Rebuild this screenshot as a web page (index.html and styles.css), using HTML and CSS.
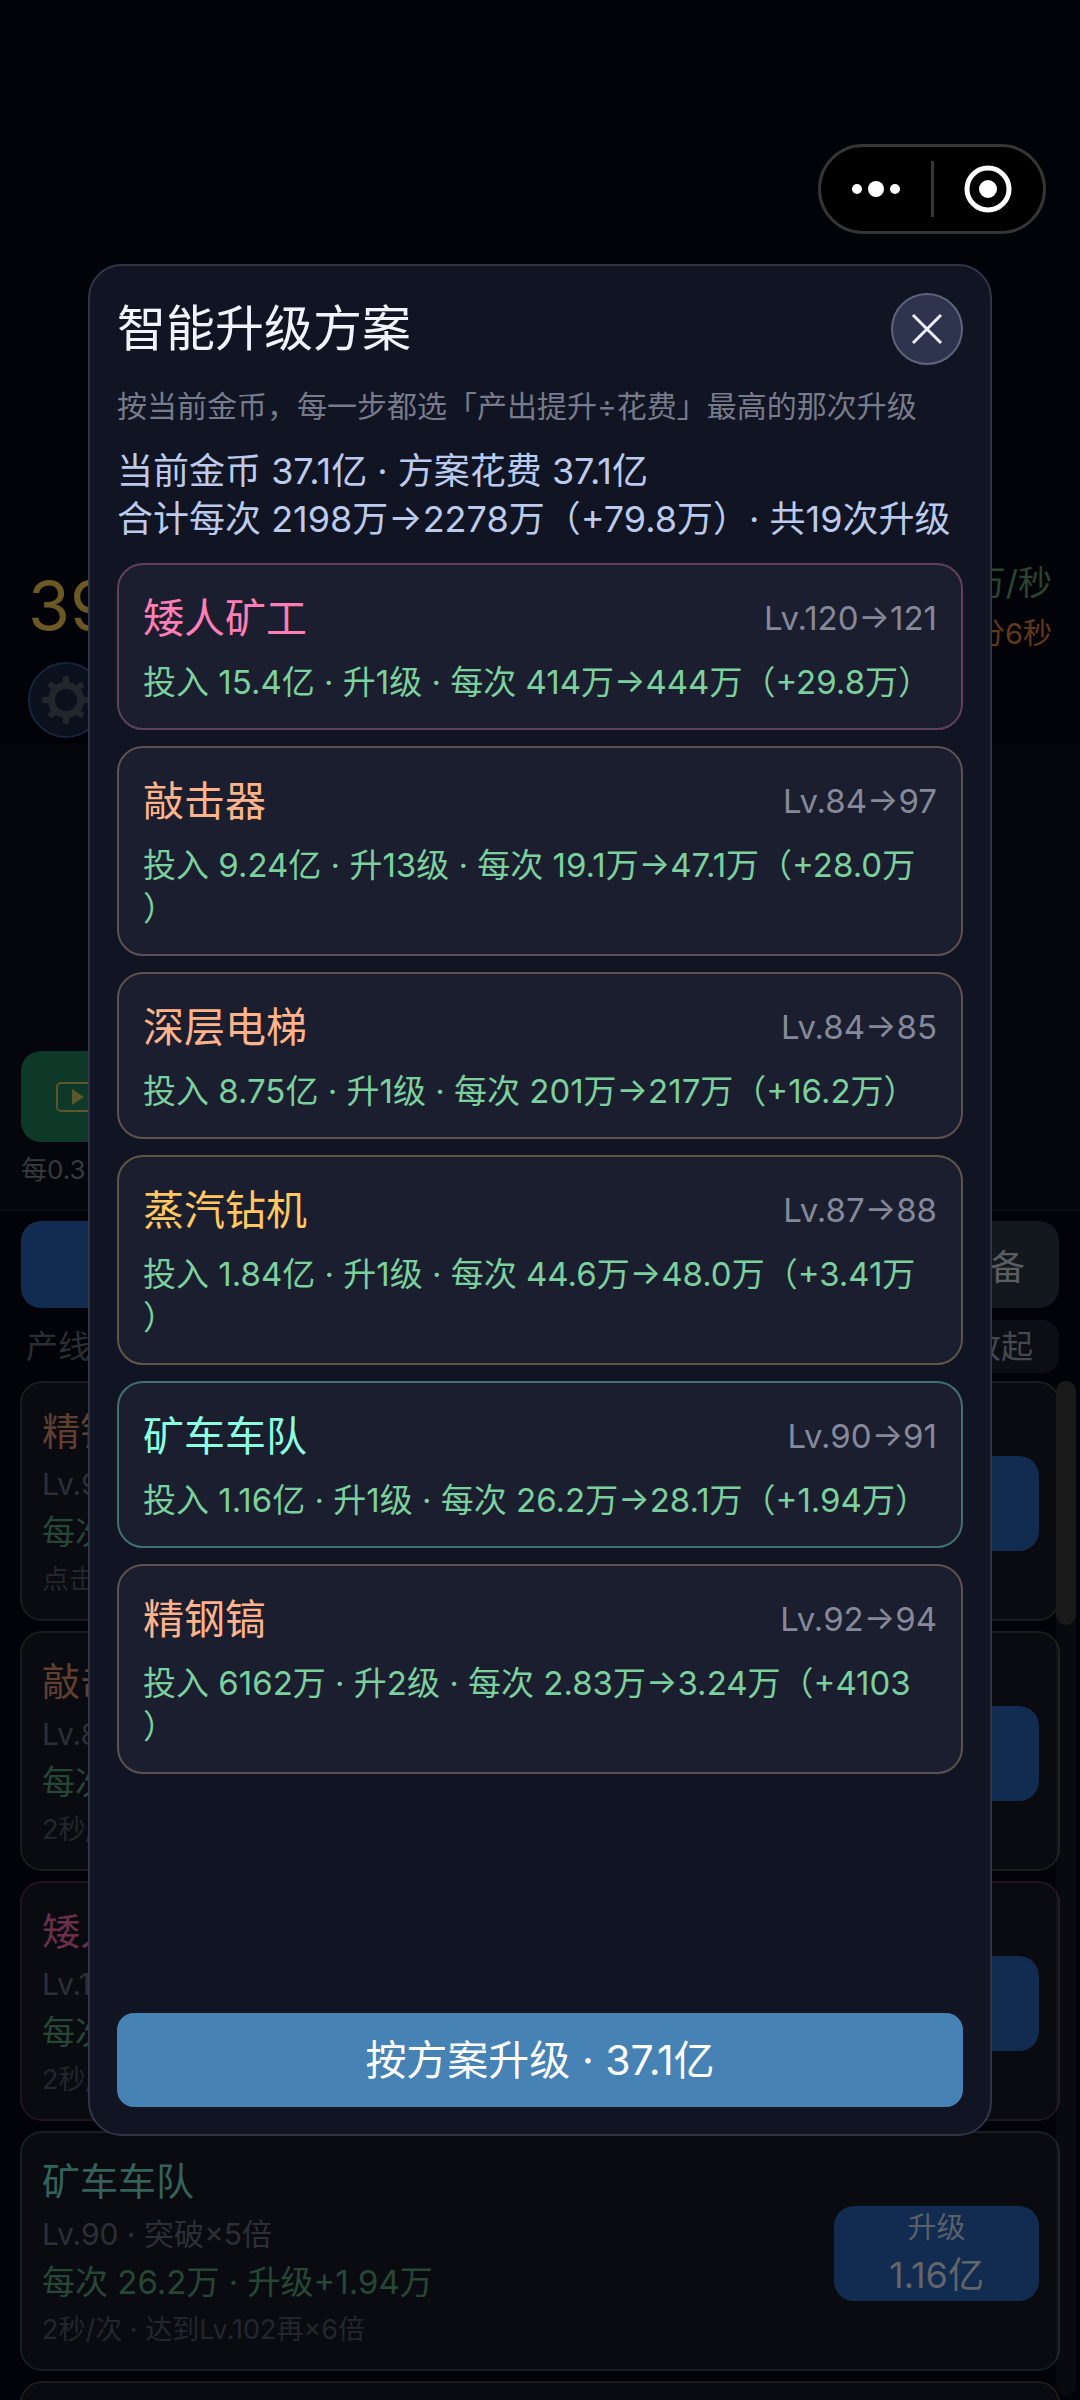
FILE: index.html
```html
<!DOCTYPE html>
<html lang="zh-CN">

<head>
    <meta charset="UTF-8">
    <meta name="viewport" content="width=device-width, initial-scale=1.0">
    <title>智能升级方案</title>
    <link rel="stylesheet" href="styles.css">
</head>

<body>
    <!-- game page -->
    <main class="game">
        <header class="status">
            <div class="status-row">
                <p class="coins">39</p>
                <div class="rates">
                    <p class="rate">万/秒</p>
                    <p class="timer">分6秒</p>
                </div>
            </div>
            <button class="settings" type="button" aria-label="设置">
                <svg viewBox="0 0 50 50" width="50" height="50">
                    <g fill="none" stroke="currentColor">
                        <circle cx="25" cy="25" r="14.500" stroke-width="7" />
                        <path stroke-width="6.500" stroke-linecap="round" d="M25 8V4M25 42v4M8 25H4M42 25h4M13 13l-2.500-2.500M37 37l2.500 2.500M37 13l2.500-2.500M13 37l-2.500 2.500" />
                    </g>
                </svg>
            </button>
        </header>

        <section class="scene">
            <button class="ad-button" type="button" aria-label="播放">
                <svg viewBox="0 0 44 30" width="44" height="30">
                    <rect x="1" y="1" width="42" height="28" rx="4" fill="none" stroke="currentColor" stroke-width="2" />
                    <path d="M16 7l12 8-12 8z" fill="currentColor" />
                </svg>
            </button>
            <p class="ad-note">每0.3</p>
        </section>

        <nav class="tabs">
            <button class="tab active" type="button" aria-label="产线"></button>
            <button class="tab" type="button">装备</button>
        </nav>

        <div class="list-head">
            <h2>产线</h2>
            <button class="fold" type="button">收起</button>
        </div>

        <section class="lines">
            <article class="line orange">
                <div class="line-info">
                    <h3>精钢</h3>
                    <p class="level">Lv.9</p>
                    <p class="output">每次</p>
                    <p class="hint">点击</p>
                </div>
                <button class="upgrade" type="button" aria-label="升级"></button>
            </article>
            <article class="line orange">
                <div class="line-info">
                    <h3>敲击</h3>
                    <p class="level">Lv.8</p>
                    <p class="output">每次</p>
                    <p class="hint">2秒/</p>
                </div>
                <button class="upgrade" type="button" aria-label="升级"></button>
            </article>
            <article class="line pink">
                <div class="line-info">
                    <h3>矮人</h3>
                    <p class="level">Lv.1</p>
                    <p class="output">每次</p>
                    <p class="hint">2秒/</p>
                </div>
                <button class="upgrade" type="button" aria-label="升级"></button>
            </article>
            <article class="line teal">
                <div class="line-info">
                    <h3>矿车车队</h3>
                    <p class="level">Lv.90 · 突破×5倍</p>
                    <p class="output">每次 26.2万 · 升级+1.94万</p>
                    <p class="hint">2秒/次 · 达到Lv.102再×6倍</p>
                </div>
                <button class="upgrade" type="button"><span>升级</span><strong>1.16亿</strong></button>
            </article>
            <article class="line gold"></article>
            <div class="scrollbar"><div class="thumb"></div></div>
        </section>
    </main>

    <!-- upgrade plan -->
    <div class="overlay">
        <div class="modal" role="dialog" aria-labelledby="planTitle">
            <div class="modal-head">
                <h1 id="planTitle">智能升级方案</h1>
                <button class="close" type="button" aria-label="关闭">
                    <svg viewBox="0 0 32 32" width="32" height="32">
                        <path d="M2 2l28 28M30 2L2 30" fill="none" stroke="currentColor" stroke-width="3" />
                    </svg>
                </button>
            </div>
            <p class="modal-tip">按当前金币，每一步都选「产出提升÷花费」最高的那次升级</p>
            <p class="summary">当前金币 37.1亿 · 方案花费 37.1亿<br>合计每次 2198万→2278万（+79.8万）· 共19次升级</p>

            <ul class="plan">
                <li class="step pink">
                    <div class="step-head"><h2>矮人矿工</h2><span>Lv.120→121</span></div>
                    <p>投入 15.4亿 · 升1级 · 每次 414万→444万（+29.8万）</p>
                </li>
                <li class="step orange">
                    <div class="step-head"><h2>敲击器</h2><span>Lv.84→97</span></div>
                    <p>投入 9.24亿 · 升13级 · 每次 19.1万→47.1万（+28.0万<br>）</p>
                </li>
                <li class="step orange">
                    <div class="step-head"><h2>深层电梯</h2><span>Lv.84→85</span></div>
                    <p>投入 8.75亿 · 升1级 · 每次 201万→217万（+16.2万）</p>
                </li>
                <li class="step gold">
                    <div class="step-head"><h2>蒸汽钻机</h2><span>Lv.87→88</span></div>
                    <p>投入 1.84亿 · 升1级 · 每次 44.6万→48.0万（+3.41万<br>）</p>
                </li>
                <li class="step teal">
                    <div class="step-head"><h2>矿车车队</h2><span>Lv.90→91</span></div>
                    <p>投入 1.16亿 · 升1级 · 每次 26.2万→28.1万（+1.94万）</p>
                </li>
                <li class="step orange">
                    <div class="step-head"><h2>精钢镐</h2><span>Lv.92→94</span></div>
                    <p>投入 6162万 · 升2级 · 每次 2.83万→3.24万（+4103<br>）</p>
                </li>
            </ul>

            <button class="confirm" type="button">按方案升级 · 37.1亿</button>
        </div>
    </div>

    <!-- mini program menu -->
    <div class="capsule">
        <button type="button" aria-label="更多">
            <svg viewBox="0 0 50 20" width="50" height="20" fill="currentColor">
                <circle cx="6" cy="10" r="5" />
                <circle cx="25" cy="10" r="8" />
                <circle cx="44" cy="10" r="5" />
            </svg>
        </button>
        <button type="button" aria-label="退出">
            <svg viewBox="0 0 48 48" width="48" height="48">
                <circle cx="24" cy="24" r="21" fill="none" stroke="currentColor" stroke-width="5" />
                <circle cx="24" cy="24" r="9" fill="currentColor" />
            </svg>
        </button>
    </div>
</body>

</html>
```
FILE: styles.css
```css
:root {
    --modal: #111422;
    --card: #1b1e2e;
    --green: #7bd09e;
    --blue: #122b50;
}

* {
    margin: 0;
    padding: 0;
    box-sizing: border-box;
}

body {
    font-family: Inter, "Noto Sans CJK SC", sans-serif;
    text-spacing-trim: space-all;
    background-color: #020308;
    height: 100vh;
    overflow: hidden;
}

h1,
h2,
h3,
strong {
    font-weight: normal;
}

ul {
    list-style: none;
}

button {
    font-family: inherit;
    border: none;
    cursor: pointer;
}

svg {
    display: block;
}

/* game page */
.game {
    height: 100vh;
    overflow: hidden;
    padding-top: 558px;
}

.status {
    padding: 0 28px;
    height: 187px;
}

.status-row {
    display: flex;
    justify-content: space-between;
    height: 104px;
}

.coins {
    font-size: 68px;
    line-height: 94px;
    color: #6b5824;
}

.rates {
    text-align: right;
}

.rate {
    font-size: 34px;
    line-height: 50px;
    color: #29452f;
}

.timer {
    font-size: 29px;
    line-height: 52px;
    color: #65381e;
}

.settings {
    width: 76px;
    height: 76px;
    border-radius: 50%;
    border: 2px solid #17243c;
    background-color: #0a101c;
    color: #21272d;
    display: flex;
    align-items: center;
    justify-content: center;
}

.scene {
    height: 466px;
    padding: 0 21px;
    display: flex;
    flex-direction: column;
    justify-content: flex-end;
    background-color: #04060b;
    border-bottom: 2px solid #0c0e12;
}

.ad-button {
    width: 300px;
    height: 91px;
    border-radius: 20px;
    background-color: #0e3929;
    color: #5d562c;
    padding-left: 35px;
}

.ad-note {
    font-size: 26px;
    line-height: 40px;
    margin: 8px 0 19px;
    color: #363b3d;
}

.tabs {
    display: flex;
    justify-content: space-between;
    padding: 10px 21px 12px;
}

.tab {
    width: 138px;
    height: 87px;
    border-radius: 20px;
    background-color: #13171e;
    color: #5b5d60;
    font-size: 35px;
}

.tab.active {
    background-color: var(--blue);
}

.list-head {
    display: flex;
    justify-content: space-between;
    align-items: center;
    padding: 0 21px 0 26px;
    margin-bottom: 8px;
}

.list-head h2 {
    font-size: 32px;
    line-height: 53px;
    color: #2c2e34;
}

.fold {
    height: 53px;
    padding: 0 26px;
    border-radius: 16px;
    background-color: #0b0e15;
    color: #45484f;
    font-size: 32px;
    line-height: 50px;
}

.lines {
    position: relative;
    padding: 0 20px;
    display: flex;
    flex-direction: column;
    gap: 10px;
}

.line {
    min-height: 240px;
    display: flex;
    justify-content: space-between;
    align-items: center;
    padding: 18px 19px 14px 20px;
    border: 2px solid;
    border-radius: 22px;
    background-color: #0a0b10;
}

.line h3 {
    font-size: 38px;
    line-height: 58px;
}

.line.orange {
    border-color: #1d1a1b;
}

.line.orange h3 {
    color: #613f30;
}

.line.pink {
    border-color: #20151c;
}

.line.pink h3 {
    color: #692f4b;
}

.line.teal {
    border-color: #152021;
}

.line.teal h3 {
    color: #34625a;
}

.line.gold {
    border-color: #1e1a16;
}

.level,
.output,
.hint {
    line-height: 48px;
}

.level {
    font-size: 30px;
    color: #2d2f37;
}

.output {
    font-size: 33px;
    color: #264735;
}

.hint {
    font-size: 27px;
    color: #24262e;
}

.upgrade {
    width: 205px;
    height: 95px;
    border-radius: 20px;
    background-color: var(--blue);
    color: #5b6069;
    display: flex;
    flex-direction: column;
    align-items: center;
}

.upgrade span {
    font-size: 29px;
    line-height: 43px;
}

.upgrade strong {
    font-size: 36px;
    line-height: 52px;
    color: #626569;
}

.scrollbar {
    position: absolute;
    top: 0;
    right: 4px;
    width: 20px;
    height: 1015px;
    border-radius: 10px;
    background-color: rgba(255, 255, 255, 0.03);
}

.thumb {
    height: 244px;
    border-radius: 10px;
    background-color: #1a1a1b;
}

/* upgrade plan */
.overlay {
    position: fixed;
    inset: 0;
    display: flex;
    align-items: center;
    padding: 0 88px;
}

.modal {
    width: 100%;
    height: 78vh;
    display: flex;
    flex-direction: column;
    padding: 27px;
    border: 2px solid #313547;
    border-radius: 34px;
    background-color: var(--modal);
}

.modal-head {
    display: flex;
    justify-content: space-between;
    align-items: center;
}

.modal-head h1 {
    font-size: 49px;
    line-height: 72px;
    color: #f1f4ff;
}

.close {
    width: 72px;
    height: 72px;
    border-radius: 50%;
    border: 2px solid #5f647a;
    background-color: #2f344e;
    color: #eef1ff;
    display: flex;
    align-items: center;
    justify-content: center;
}

.modal-tip {
    font-size: 30px;
    line-height: 42px;
    margin: 20px 0;
    color: #777b8b;
}

.summary {
    font-size: 36px;
    line-height: 48px;
    margin-bottom: 20px;
    color: #bccbed;
    white-space: nowrap;
}

.plan {
    flex: 1;
    display: flex;
    flex-direction: column;
    gap: 16px;
}

.step {
    padding: 22px 24px 24px;
    border: 2px solid;
    border-radius: 26px;
    background-color: var(--card);
}

.step-head {
    display: flex;
    justify-content: space-between;
    align-items: center;
    margin-bottom: 12px;
}

.step-head h2 {
    font-size: 41px;
    line-height: 62px;
}

.step-head span {
    font-size: 33px;
    color: #85899a;
}

.step p {
    font-size: 33px;
    line-height: 43px;
    color: var(--green);
    white-space: nowrap;
}

.step.pink {
    border-color: #60405b;
}

.step.pink h2 {
    color: #ff7eb6;
}

.step.orange {
    border-color: #5d5051;
}

.step.orange h2 {
    color: #ffb38a;
}

.step.gold {
    border-color: #5f5549;
}

.step.gold h2 {
    color: #ffc861;
}

.step.teal {
    border-color: #42706f;
}

.step.teal h2 {
    color: #8bffe0;
}

.confirm {
    height: 94px;
    border-radius: 17px;
    background-color: #4682b4;
    color: #fff;
    font-size: 41px;
    line-height: 60px;
}

/* mini program menu */
.capsule {
    position: fixed;
    top: 144px;
    right: 34px;
    width: 228px;
    height: 90px;
    display: flex;
    align-items: center;
    border: 3px solid #353535;
    border-radius: 45px;
    background-color: #000;
}

.capsule button {
    flex: 1;
    height: 56px;
    display: flex;
    align-items: center;
    justify-content: center;
    background: none;
    color: #fff;
}

.capsule button + button {
    border-left: 3px solid #353535;
}
```
